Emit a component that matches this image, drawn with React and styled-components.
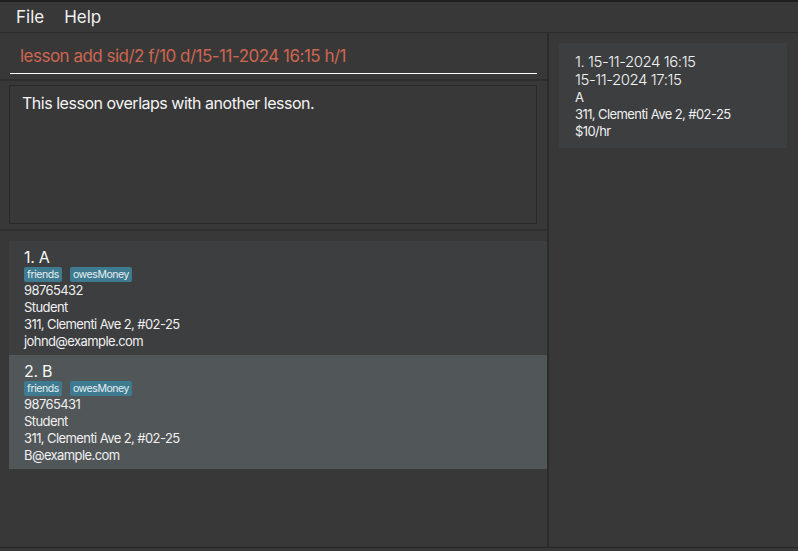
import React from 'react';
import styled, { createGlobalStyle } from 'styled-components';

const Global = createGlobalStyle`
	html, body {
		margin: 0;
		padding: 0;
		background: #383838;
	}
	* {
		box-sizing: border-box;
	}
`;

const Window = styled.div`
	width: 798px;
	height: 548px;
	display: flex;
	flex-direction: column;
	background: #383838;
	font-family: 'Inter', 'Open Sans', sans-serif;
	color: #ffffff;
	border-top: 2px solid #1f1f1f;
	border-bottom: 1px solid #262626;
	overflow: hidden;
`;

const MenuBar = styled.div`
	height: 31px;
	display: flex;
	align-items: center;
	gap: 20px;
	padding-left: 16px;
	border-bottom: 1px solid #2b2b2b;
	font-size: 17px;
	color: #f0f0f0;
`;

const Main = styled.div`
	flex: 1;
	display: flex;
	min-height: 0;
`;

const LeftPane = styled.div`
	width: 549px;
	display: flex;
	flex-direction: column;
	border-right: 2px solid #2b2b2b;
`;

const CommandArea = styled.div`
	height: 48px;
	padding: 0 10px;
	border-bottom: 2px solid #2e2e2e;
`;

const CommandField = styled.div`
	width: 527px;
	height: 41px;
	display: flex;
	align-items: center;
	padding: 6px 10px 0;
	border-bottom: 1.5px solid #ffffff;
	color: #d06651;
	font-size: 17px;
	letter-spacing: -0.03em;
`;

const ResultArea = styled.div`
	height: 150px;
	padding: 4px 10px 0 9px;
	border-bottom: 2px solid #2e2e2e;
`;

const ResultBox = styled.div`
	height: 139px;
	width: 528px;
	border: 1px solid #292929;
	padding: 7px 12px;
	font-size: 16px;
	letter-spacing: -0.03em;
	color: #f4f4f4;
`;

const ListArea = styled.div`
	flex: 1;
	padding: 10px 0 0 9px;
	display: flex;
	flex-direction: column;
`;

const PersonCard = styled.div`
	height: 114px;
	background: ${p => (p.$alt ? '#515658' : '#3c3e40')};
	padding: 7px 15px 5px;
	display: flex;
	flex-direction: column;
`;

const Name = styled.div`
	font-size: 16px;
	line-height: 18px;
	letter-spacing: -0.02em;
	color: #f6f6f6;
`;

const Tags = styled.div`
	display: flex;
	gap: 8px;
	margin-top: 1px;
	height: 15px;
`;

const Tag = styled.span`
	background: #3e7b91;
	color: #e8eef0;
	font-size: 10.5px;
	line-height: 15px;
	letter-spacing: -0.04em;
	padding: 0 3px;
	border-radius: 2px;
`;

const Detail = styled.div`
	font-size: 13px;
	line-height: 17px;
	letter-spacing: -0.045em;
	color: #f0f0f0;
`;

const RightPane = styled.div`
	flex: 1;
	padding: 10px 11px 0 10px;
`;

const LessonCard = styled.div`
	background: #3c3e40;
	padding: 10px 16px 8px;
`;

const Time = styled.div`
	font-size: 15px;
	line-height: 18px;
	letter-spacing: -0.03em;
	font-weight: 300;
	color: #f2f2f2;
`;

const persons = [
	{ name: '1. A', phone: '98765432', email: 'johnd@example.com' },
	{ name: '2. B', phone: '98765431', email: 'B@example.com' },
];

export default function App() {
	return (
		<Window>
			<Global />
			<MenuBar>
				<span>File</span>
				<span>Help</span>
			</MenuBar>
			<Main>
				<LeftPane>
					<CommandArea>
						<CommandField>lesson add sid/2 f/10 d/15-11-2024 16:15 h/1</CommandField>
					</CommandArea>
					<ResultArea>
						<ResultBox>This lesson overlaps with another lesson.</ResultBox>
					</ResultArea>
					<ListArea>
						{persons.map((p, i) => (
							<PersonCard key={p.name} $alt={i % 2 === 1}>
								<Name>{p.name}</Name>
								<Tags>
									<Tag>friends</Tag>
									<Tag>owesMoney</Tag>
								</Tags>
								<Detail>{p.phone}</Detail>
								<Detail>Student</Detail>
								<Detail>311, Clementi Ave 2, #02-25</Detail>
								<Detail>{p.email}</Detail>
							</PersonCard>
						))}
					</ListArea>
				</LeftPane>
				<RightPane>
					<LessonCard>
						<Time>1. 15-11-2024 16:15</Time>
						<Time>15-11-2024 17:15</Time>
						<Detail>A</Detail>
						<Detail>311, Clementi Ave 2, #02-25</Detail>
						<Detail>$10/hr</Detail>
					</LessonCard>
				</RightPane>
			</Main>
		</Window>
	);
}
